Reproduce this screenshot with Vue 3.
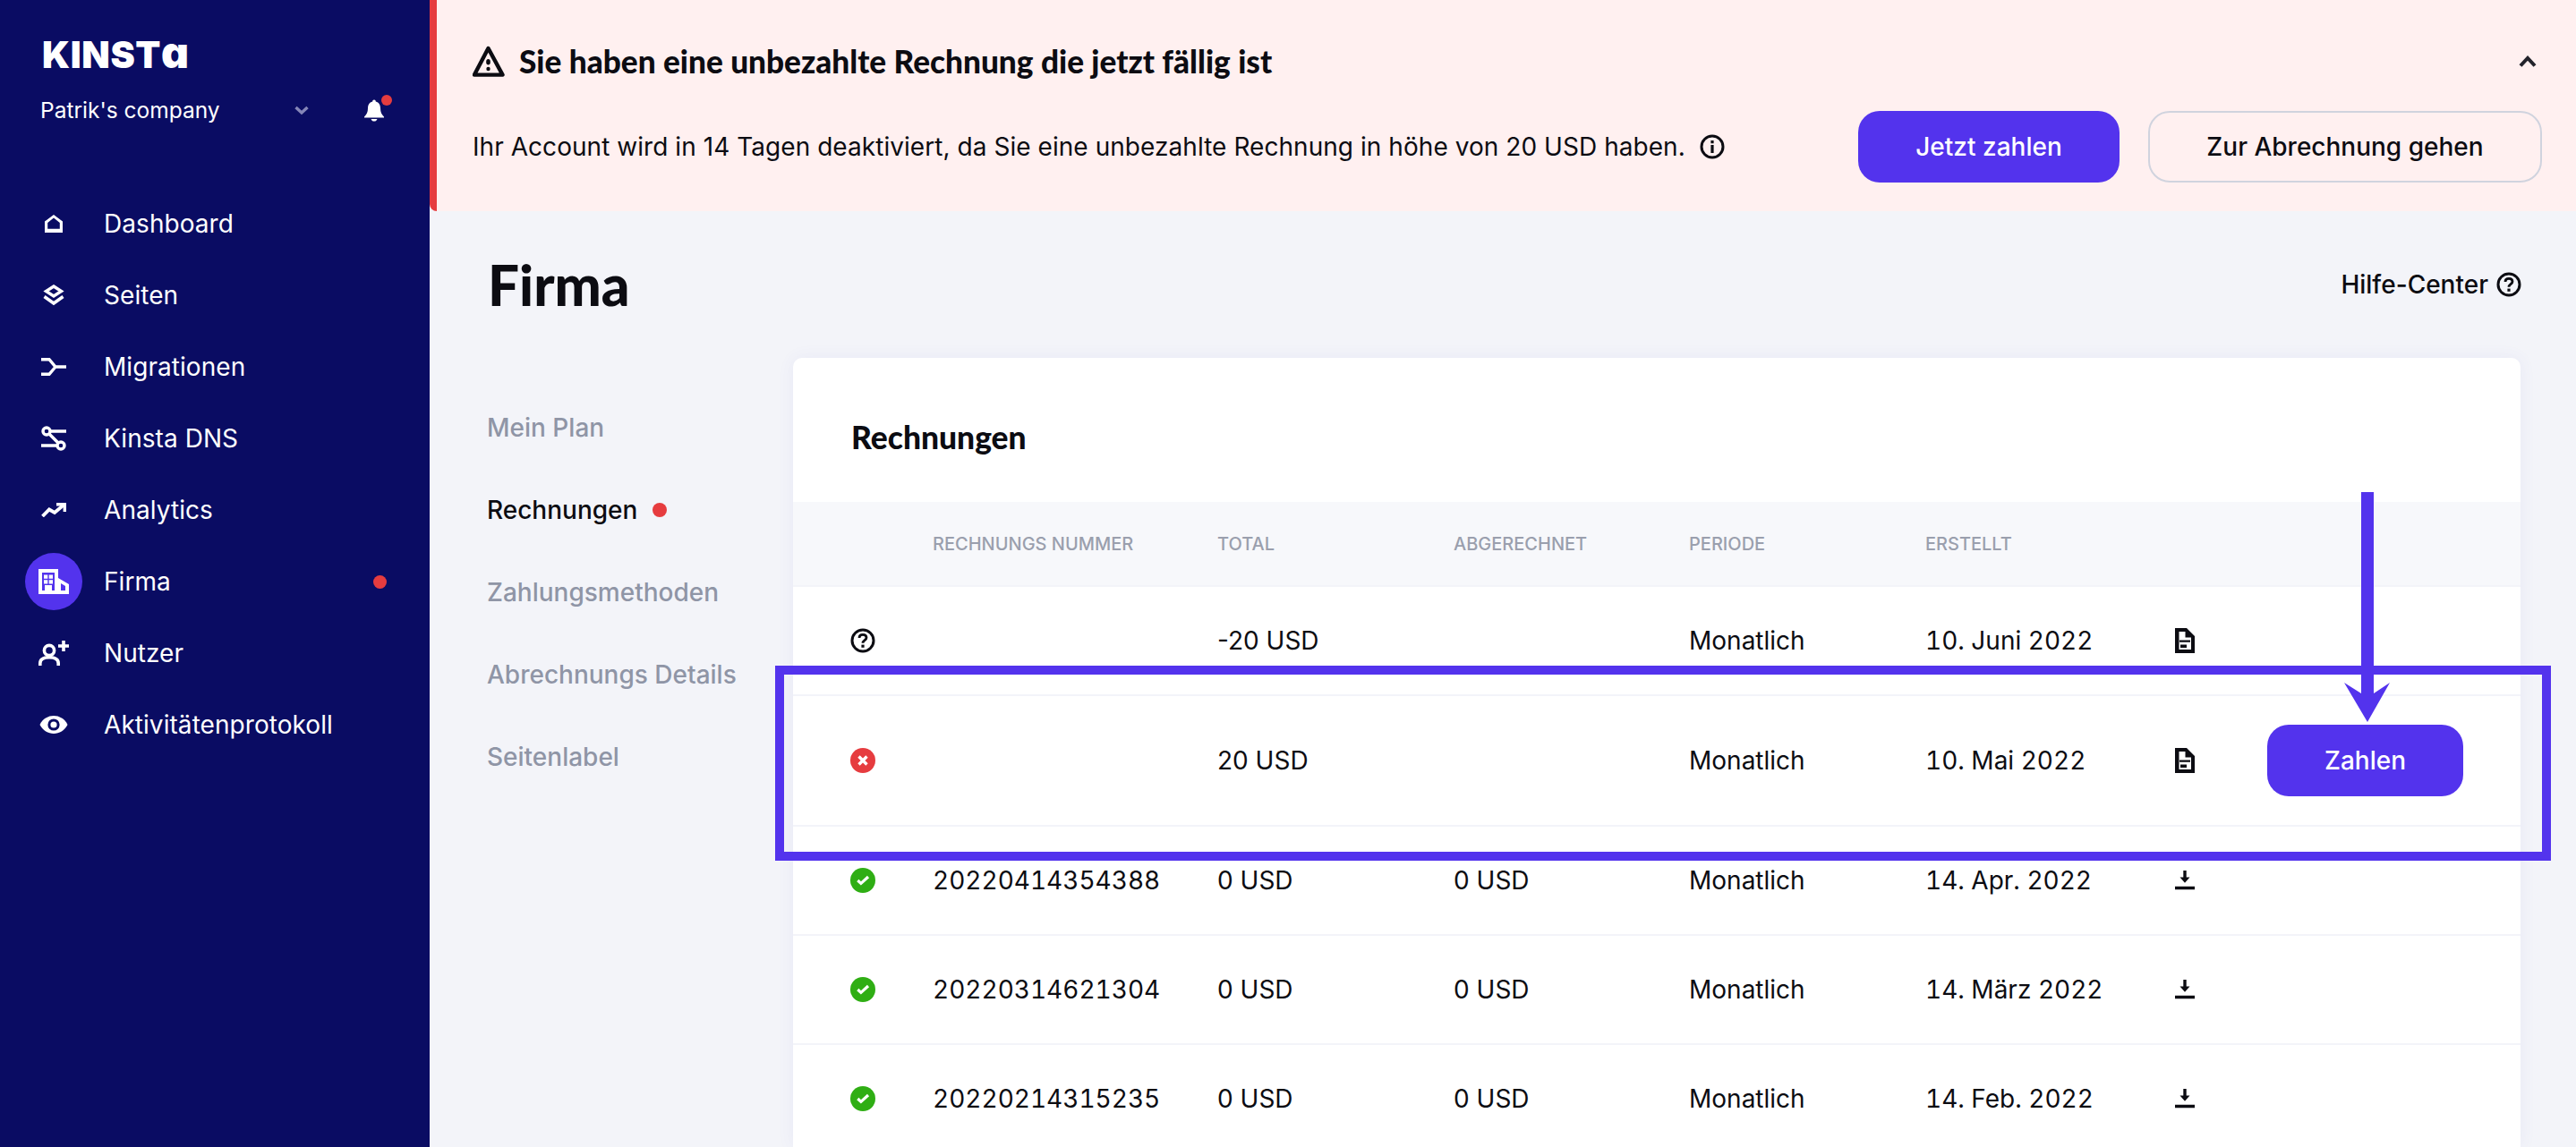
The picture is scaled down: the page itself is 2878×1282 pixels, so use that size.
<script setup>
const navItems = [
  { key: "home", label: "Dashboard" },
  { key: "layers", label: "Seiten" },
  { key: "migrate", label: "Migrationen" },
  { key: "dns", label: "Kinsta DNS" },
  { key: "analytics", label: "Analytics" },
  { key: "firma", label: "Firma", active: true, dot: true },
  { key: "user", label: "Nutzer" },
  { key: "eye", label: "Aktivitätenprotokoll" },
];

const subNav = [
  { label: "Mein Plan" },
  { label: "Rechnungen", active: true, dot: true },
  { label: "Zahlungsmethoden" },
  { label: "Abrechnungs Details" },
  { label: "Seitenlabel" },
];

const columns = ["", "Rechnungs Nummer", "Total", "Abgerechnet", "Periode", "Erstellt", "", ""];

const invoices = [
  { status: "open", number: "", total: "-20 USD", paid: "", created: "10. Juni 2022", file: "doc" },
  { status: "failed", number: "", total: "20 USD", paid: "", created: "10. Mai 2022", file: "doc", pay: true },
  { status: "ok", number: "20220414354388", total: "0 USD", paid: "0 USD", created: "14. Apr. 2022", file: "download" },
  { status: "ok", number: "20220314621304", total: "0 USD", paid: "0 USD", created: "14. März 2022", file: "download" },
  { status: "ok", number: "20220214315235", total: "0 USD", paid: "0 USD", created: "14. Feb. 2022", file: "download" },
];
</script>

<template>
  <div class="app">
    <aside class="sidebar">
      <div class="logo">KINST<span class="logo-a">ɑ</span></div>
      <div class="company">
        <span class="company-name">Patrik's company</span>
        <svg class="chevron" viewBox="0 0 16 11" width="16" height="11">
          <path d="M1.5 2 L8 8 L14.5 2" fill="none" stroke="#8586b8" stroke-width="3.4" />
        </svg>
        <span class="bell">
          <svg viewBox="0 0 22 25" width="22" height="25">
            <path d="M11 0.5 C12.2 0.5 12.8 1.3 12.8 2.4 C16.4 3.4 18 6.2 18 10 C18 14.5 19.4 17 22 19.5 V20.5 H0 V19.5 C2.6 17 4 14.5 4 10 C4 6.2 5.6 3.4 9.2 2.4 C9.2 1.3 9.8 0.5 11 0.5 Z" fill="#fff" />
            <path d="M7.5 22 H14.5 C14 23.6 12.6 24.6 11 24.6 C9.4 24.6 8 23.6 7.5 22 Z" fill="#fff" />
          </svg>
          <i class="bell-dot"></i>
        </span>
      </div>
      <nav class="nav">
        <a v-for="item in navItems" :key="item.key" class="nav-item">
          <span class="nav-icon" :class="{ active: item.active }">
            <svg v-if="item.key === 'home'" viewBox="0 0 20 20" width="20" height="20">
              <path fill="#fff" fill-rule="evenodd" d="M10 0 L20 7.5 V20 H0 V7.5 Z M10 3.6 L3.2 8.9 V15.8 H16.8 V8.9 Z" />
            </svg>
            <svg v-else-if="item.key === 'layers'" viewBox="0 0 24 24" width="24" height="24">
              <path fill="none" stroke="#fff" stroke-width="3.4" d="M12 2 L20.5 7.5 L12 13 L3.5 7.5 Z" />
              <path fill="none" stroke="#fff" stroke-width="3.6" d="M1.5 13.5 L12 21 L22.5 13.5" />
            </svg>
            <svg v-else-if="item.key === 'migrate'" viewBox="0 0 28 20" width="28" height="20">
              <path fill="none" stroke="#fff" stroke-width="3.4" d="M0 1.7 H9 L16 10 H28 M0 18.3 H9 L16 10" />
            </svg>
            <svg v-else-if="item.key === 'dns'" viewBox="0 0 28 28" width="28" height="28">
              <g fill="none" stroke="#fff" stroke-width="3.4">
                <circle cx="6" cy="6" r="4" />
                <circle cx="22" cy="22" r="4" />
                <path d="M10 6 H28 M0 22 H18 M9 9 L19 19" />
              </g>
            </svg>
            <svg v-else-if="item.key === 'analytics'" viewBox="0 0 28 16" width="28" height="16">
              <path fill="none" stroke="#fff" stroke-width="3.8" d="M1.5 15 L9 7.5 L15 11 L25 2.5" />
              <path fill="none" stroke="#fff" stroke-width="3.4" d="M17 1.8 H26.3 V10" />
            </svg>
            <svg v-else-if="item.key === 'firma'" viewBox="0 0 34 28" width="34" height="28">
              <path fill="#fff" d="M0 0 H22 V28 H0 Z M22 10 L34 17 V28 H22 Z" />
              <path fill="#5333ed" d="M4 4 H18 V24 H15 V18 H7 V24 H4 Z M25 16 L30 19 V24 H25 Z" />
              <path fill="#fff" d="M6 6.5 H10.3 V10.8 H6 Z M11.7 6.5 H16 V10.8 H11.7 Z M6 12.2 H10.3 V16.5 H6 Z M11.7 12.2 H16 V16.5 H11.7 Z" />
            </svg>
            <svg v-else-if="item.key === 'user'" viewBox="0 0 34 28" width="34" height="28">
              <g fill="none" stroke="#fff" stroke-width="3.6">
                <circle cx="12" cy="11" r="5.6" />
                <path d="M1.8 28 V25.5 C1.8 21 6 18.8 12 18.8 C18 18.8 22.2 21 22.2 25.5 V28" />
                <path d="M28 0 V12 M22 6 H34" />
              </g>
            </svg>
            <svg v-else viewBox="0 0 32 20" width="32" height="20">
              <path fill="#fff" d="M0.5 10 C7 -3.2 25 -3.2 31.5 10 C25 23.2 7 23.2 0.5 10 Z" />
              <circle cx="16" cy="10" r="6.6" fill="#0a0c63" />
              <circle cx="16" cy="10" r="3.6" fill="#fff" />
            </svg>
          </span>
          <span class="nav-label">{{ item.label }}</span>
          <i v-if="item.dot" class="nav-dot"></i>
        </a>
      </nav>
    </aside>

    <main class="main">
      <section class="banner">
        <div class="banner-top">
          <svg class="warn" viewBox="0 0 36 36" width="36" height="36">
            <path fill="none" stroke="#0c0c12" stroke-width="4.4" stroke-linejoin="round" d="M17.5 4 L33.5 33.6 H2 Z" />
            <path fill="#0c0c12" d="M15.2 18.5 C15.2 17 16.2 16 17.5 16 C18.8 16 19.8 17 19.8 18.5 V20 C19.8 21.5 18.8 22.5 17.5 22.5 C16.2 22.5 15.2 21.5 15.2 20 Z" />
            <circle cx="17.5" cy="27" r="2.2" fill="#0c0c12" />
          </svg>
          <h2 class="banner-title">Sie haben eine unbezahlte Rechnung die jetzt fällig ist</h2>
          <svg class="caret" viewBox="0 0 20 13" width="20" height="13">
            <path d="M2 11.5 L10 3 L18 11.5" fill="none" stroke="#23232b" stroke-width="4" />
          </svg>
        </div>
        <div class="banner-bottom">
          <span class="banner-text">Ihr Account wird in 14 Tagen deaktiviert, da Sie eine unbezahlte Rechnung in höhe von 20 USD haben.</span>
          <svg class="info" viewBox="0 0 28 28" width="28" height="28">
            <circle cx="14" cy="14" r="12" fill="none" stroke="#0c0c12" stroke-width="3" />
            <path fill="#0c0c12" d="M12.4 7 H15.6 V10.2 H12.4 Z M12.4 12 H15.6 V21 H12.4 Z" />
          </svg>
          <div class="banner-actions">
            <button class="btn btn-primary pay-now">Jetzt zahlen</button>
            <button class="btn btn-ghost">Zur Abrechnung gehen</button>
          </div>
        </div>
      </section>

      <section class="content">
        <header class="page-head">
          <h1 class="page-title">Firma</h1>
          <a class="help">
            Hilfe-Center
            <svg viewBox="0 0 28 28" width="28" height="28">
              <circle cx="14" cy="14" r="12" fill="none" stroke="#0c0c12" stroke-width="3" />
              <path fill="none" stroke="#0c0c12" stroke-width="2.8" d="M10 11 C10 8.6 11.8 7.4 14 7.4 C16.4 7.4 18 8.8 18 10.8 C18 13.6 14 13.8 14 16.8" />
              <rect x="12.4" y="18.6" width="3.2" height="3.2" fill="#0c0c12" />
            </svg>
          </a>
        </header>

        <div class="columns">
          <ul class="subnav">
            <li v-for="entry in subNav" :key="entry.label" :class="{ active: entry.active }">
              {{ entry.label }}
              <i v-if="entry.dot" class="sub-dot"></i>
            </li>
          </ul>

          <div class="card">
            <h3 class="card-title">Rechnungen</h3>
            <div class="row head">
              <span v-for="(col, i) in columns" :key="i">{{ col }}</span>
            </div>
            <div v-for="inv in invoices" :key="inv.created" class="row" :class="{ tall: inv.pay }">
              <span class="status">
                <svg v-if="inv.status === 'open'" viewBox="0 0 28 28" width="28" height="28">
                  <circle cx="14" cy="14" r="12" fill="none" stroke="#0c0c12" stroke-width="3" />
                  <path fill="none" stroke="#0c0c12" stroke-width="2.8" d="M10 11 C10 8.6 11.8 7.4 14 7.4 C16.4 7.4 18 8.8 18 10.8 C18 13.6 14 13.8 14 16.8" />
                  <rect x="12.4" y="18.6" width="3.2" height="3.2" fill="#0c0c12" />
                </svg>
                <svg v-else-if="inv.status === 'failed'" viewBox="0 0 28 28" width="28" height="28">
                  <circle cx="14" cy="14" r="14" fill="#e63c3f" />
                  <path d="M9.5 9.5 L18.5 18.5 M18.5 9.5 L9.5 18.5" stroke="#fff" stroke-width="3.4" />
                </svg>
                <svg v-else viewBox="0 0 28 28" width="28" height="28">
                  <circle cx="14" cy="14" r="14" fill="#2fae14" />
                  <path d="M8.3 14 L11.9 17.4 L20 10" fill="none" stroke="#fff" stroke-width="3.2" />
                </svg>
              </span>
              <span class="num">{{ inv.number }}</span>
              <span>{{ inv.total }}</span>
              <span>{{ inv.paid }}</span>
              <span>Monatlich</span>
              <span class="num">{{ inv.created }}</span>
              <span class="file">
                <svg v-if="inv.file === 'doc'" viewBox="0 0 22 28" width="22" height="28">
                  <path fill="#0c0c12" fill-rule="evenodd" d="M0 0 H13 L22 9 V28 H0 Z M4.5 4 V24 H18 V10.5 H11.5 V4 Z" />
                  <path fill="#0c0c12" d="M5 13.6 H17 V15.8 H5 Z M6 18.5 H13 V22 H6 Z" />
                </svg>
                <svg v-else viewBox="0 0 22 22" width="22" height="22">
                  <path fill="#0c0c12" d="M9.3 0 H12.7 V7.5 H16.5 L11 13.8 L5.5 7.5 H9.3 Z M0 17.8 H22 V21.3 H0 Z" />
                </svg>
              </span>
              <span><button v-if="inv.pay" class="btn btn-primary pay-row">Zahlen</button></span>
            </div>
          </div>
        </div>
      </section>
    </main>

    <!-- annotation drawn over the screenshot -->
    <div class="mark-box"></div>
    <svg class="mark-arrow" viewBox="0 0 52 258" width="52" height="258">
      <path fill="#5333ed" d="M19 0 H33 V225 L51 213 L26 257 L0 213 L19 225 Z" />
    </svg>
  </div>
</template>

<style scoped>
.app {
  position: relative;
  display: flex;
  width: 2878px;
  height: 1282px;
  overflow: hidden;
  background: #f3f4f9;
  color: #0c0c12;
  font-family: Inter, "Liberation Sans", sans-serif;
  font-size: 28px;
}

.sidebar {
  flex: 0 0 480px;
  padding-top: 44px;
  background: #0a0c63;
  color: #fff;
}

.logo {
  height: 30px;
  margin-left: 47px;
  font-size: 41px;
  font-weight: 900;
  line-height: 30px;
  letter-spacing: 0.6px;
}

.logo-a {
  font-size: 48px;
  line-height: 30px;
}

.company {
  display: flex;
  align-items: center;
  height: 34px;
  margin-top: 32px;
  padding: 0 51px 0 45px;
}

.company-name {
  flex: 1;
  font-size: 24.5px;
}

.chevron {
  margin-right: 62px;
}

.bell {
  position: relative;
  display: flex;
}

.bell-dot {
  position: absolute;
  top: -5px;
  right: -9px;
  width: 12px;
  height: 12px;
  border-radius: 50%;
  background: #e63c3f;
}

.nav {
  display: flex;
  flex-direction: column;
  margin-top: 70px;
}

.nav-item {
  display: flex;
  align-items: center;
  height: 80px;
  padding: 0 48px 0 28px;
}

.nav-icon {
  display: flex;
  align-items: center;
  justify-content: center;
  width: 64px;
  height: 64px;
  margin-right: 24px;
  border-radius: 50%;
}

.nav-icon.active {
  background: #5333ed;
}

.nav-label {
  flex: 1;
  font-size: 28px;
  letter-spacing: 0.06px;
}

.nav-dot {
  width: 15px;
  height: 15px;
  border-radius: 50%;
  background: #e63c3f;
}

.main {
  flex: 1;
  min-width: 0;
  display: flex;
  flex-direction: column;
}

.banner {
  flex: 0 0 236px;
  display: flex;
  flex-direction: column;
  box-sizing: border-box;
  padding: 48px 38px 0 40px;
  border-left: 8px solid #e63c3f;
  border-bottom-left-radius: 8px;
  background: #fff0f0;
}

.banner-top {
  display: flex;
  align-items: center;
  height: 40px;
}

.warn {
  margin-right: 16px;
}

.banner-title {
  flex: 1;
  margin: 0;
  font-family: Lato, "Liberation Sans", sans-serif;
  font-size: 35.2px;
  font-weight: 900;
}

.caret {
  margin-right: 6px;
}

.banner-bottom {
  display: flex;
  align-items: center;
  height: 80px;
  margin-top: 36px;
}

.banner-text {
  letter-spacing: 0.05px;
}

.info {
  margin-left: 16px;
}

.banner-actions {
  display: flex;
  gap: 32px;
  margin-left: auto;
}

.btn {
  height: 80px;
  border: 0;
  border-radius: 24px;
  font-family: inherit;
  font-size: 28px;
  font-weight: 500;
}

.btn-primary {
  background: #5333ed;
  color: #fff;
}

.pay-now {
  width: 292px;
}

.pay-row {
  width: 219px;
}

.btn-ghost {
  width: 440px;
  border: 2px solid #d0d3de;
  background: transparent;
  color: #0c0c12;
}

.content {
  flex: 1;
  min-height: 0;
  display: flex;
  flex-direction: column;
  padding: 0 62px 0 65px;
}

.page-head {
  display: flex;
  align-items: center;
  justify-content: space-between;
  flex: 0 0 164px;
}

.page-title {
  margin: 0;
  font-family: Lato, "Liberation Sans", sans-serif;
  font-size: 62px;
  font-weight: 900;
}

.help {
  display: flex;
  align-items: center;
  gap: 9px;
  margin-right: -1px;
  font-weight: 500;
}

.columns {
  flex: 1;
  display: flex;
  min-height: 0;
}

.subnav {
  flex: 0 0 341px;
  margin: 0 0 0 -1px;
  padding: 32px 0 0;
  list-style: none;
}

.subnav li {
  display: flex;
  align-items: center;
  height: 92px;
  color: #8f95a6;
  font-weight: 500;
}

.subnav li.active {
  color: #0c0c12;
}

.sub-dot {
  width: 16px;
  height: 16px;
  margin-left: 17px;
  border-radius: 50%;
  background: #e63c3f;
}

.card {
  flex: 1;
  min-width: 0;
  margin-left: 1px;
  border-radius: 10px 10px 0 0;
  background: #fff;
  box-shadow: 0 0 18px rgba(90, 90, 200, 0.07);
}

.card-title {
  display: flex;
  align-items: center;
  box-sizing: border-box;
  height: 161px;
  margin: 0;
  padding: 15px 0 0 65px;
  font-family: Lato, "Liberation Sans", sans-serif;
  font-size: 35.4px;
  font-weight: 900;
}

.row {
  display: grid;
  grid-template-columns: 156px 318px 264px 263px 264px 277px 105px 283px;
  align-items: center;
  height: 122px;
  border-bottom: 2px solid #f3f4f9;
  box-sizing: border-box;
}

.row.tall {
  height: 146px;
}

.row.head {
  height: 95px;
  background: #f7f8fb;
  color: #9a9fad;
  font-size: 20px;
  font-weight: 500;
  text-transform: uppercase;
}

.num {
  font-variant-numeric: tabular-nums;
}

.status {
  display: flex;
  padding-left: 64px;
}

.file {
  display: flex;
  padding-left: 2px;
}
</style>

<style>
body {
  margin: 0;
}

.mark-box {
  position: absolute;
  left: 866px;
  top: 744px;
  width: 1984px;
  height: 218px;
  box-sizing: border-box;
  border: 10px solid #5333ed;
  pointer-events: none;
}

.mark-arrow {
  position: absolute;
  left: 2619px;
  top: 550px;
  pointer-events: none;
}
</style>
